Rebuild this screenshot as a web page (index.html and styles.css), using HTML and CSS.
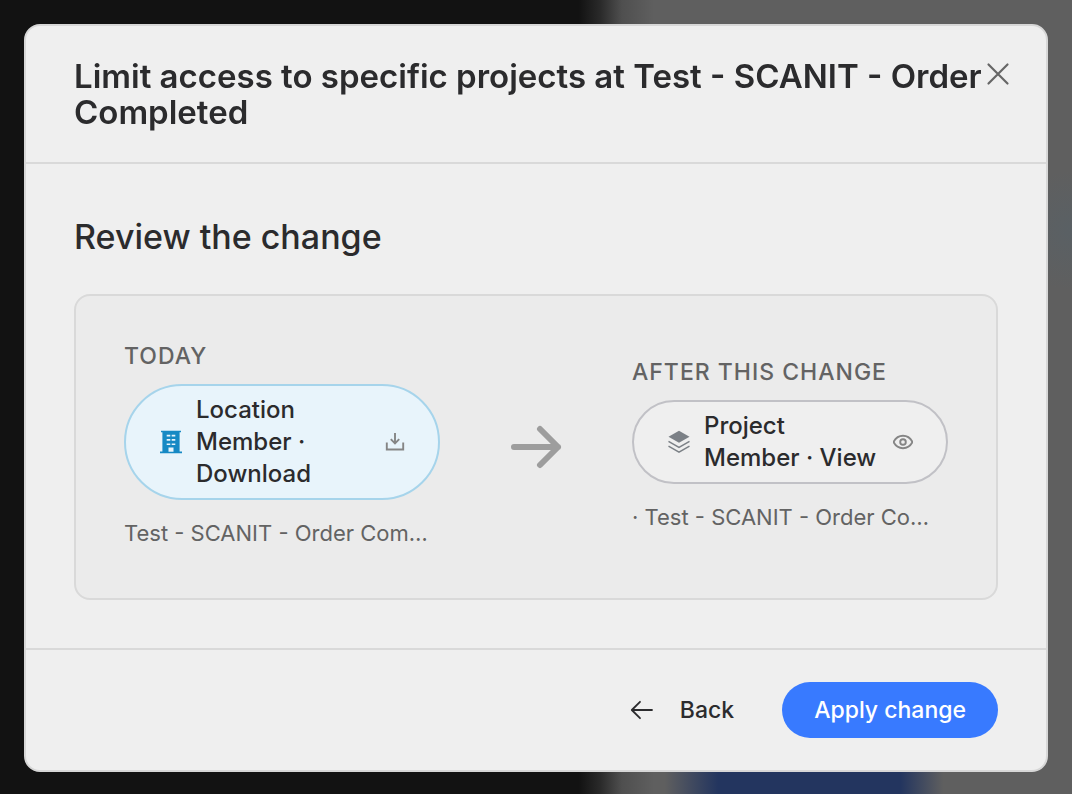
FILE: index.html
```html
<!DOCTYPE html>
<html lang="en">
<head>
<meta charset="utf-8">
<meta name="viewport" content="width=device-width, initial-scale=1">
<title>Limit access</title>
<link rel="stylesheet" href="styles.css">
</head>
<body class="page">
<div class="backdrop" aria-hidden="true"></div>
<main class="dialog" role="dialog" aria-modal="true" aria-labelledby="dialog-title">
  <header class="dialog-header">
    <h1 class="dialog-title" id="dialog-title">Limit access to specific projects at Test - SCANIT - Order Completed</h1>
    <button class="close" type="button" aria-label="Close">
      <svg width="24" height="24" viewBox="0 0 24 24" fill="none" stroke="currentColor" stroke-width="2.2" stroke-linecap="round"><path d="M2.5 2.5 21.5 21.5M21.5 2.5 2.5 21.5"/></svg>
    </button>
  </header>
  <section class="dialog-body">
    <h2 class="subtitle">Review the change</h2>
    <div class="comparison">
      <div class="state">
        <h3 class="label">TODAY</h3>
        <div class="pill pill-location">
          <svg class="role-icon" width="24" height="24" viewBox="0 0 24 24"><path fill="#1689c4" fill-rule="evenodd" d="M2 .8h20v1.4h-1.4v19.2H23v1.8H1v-1.8h2.400V2.200H2zM7.700 4.800v1.700h3.600V4.800zm5 0v1.700h3.600V4.800zm-5 4.300v1.700h3.600V9.100zm5 0v1.700h3.600V9.100zm-5 4.300v1.700h3.600v-1.700zm5 0v1.700h3.600v-1.700zM9.500 17.600v4.100h5v-4.100z"/></svg>
          <span class="role">Location Member · Download</span>
          <svg class="access-icon" width="20" height="20" viewBox="0 0 20 20" fill="none" stroke="#858585" stroke-width="1.900"><path d="M1.800 10.500v7h16.400v-7M10 1v10M5.800 7.100l4.200 4.200 4.200-4.200"/></svg>
        </div>
        <p class="scope">Test - SCANIT - Order Com…</p>
      </div>
      <svg class="change-arrow" width="52" height="44" viewBox="0 0 52 44" fill="none" stroke="#9d9d9d" stroke-width="6" stroke-linecap="round" stroke-linejoin="round"><path d="M4 22h44M30 4l18 18-18 18"/></svg>
      <div class="state">
        <h3 class="label">AFTER THIS CHANGE</h3>
        <div class="pill">
          <svg class="role-icon" width="24" height="24" viewBox="0 0 24 24"><path fill="#7b8086" d="M12 .8 22.500 6.700 12 12.800 1.500 6.700z"/><path fill="none" stroke="#7b8086" stroke-width="1.500" d="m1.500 11.300 10.500 6 10.500-6M1.500 16.200l10.500 6 10.500-6"/></svg>
          <span class="role">Project Member · View</span>
          <svg class="access-icon" width="20" height="20" viewBox="0 0 20 20" fill="none" stroke="#858585" stroke-width="1.900"><path d="M.5 10C2.500 6 6 3.800 10 3.800S17.500 6 19.500 10c-2 4-5.500 6.200-9.500 6.200S2.500 14 .5 10z"/><circle cx="10" cy="10" r="2.800"/></svg>
        </div>
        <p class="scope">· Test - SCANIT - Order Co…</p>
      </div>
    </div>
  </section>
  <footer class="dialog-footer">
    <button class="button button-back" type="button">
      <svg width="24" height="24" viewBox="0 0 24 24" fill="none" stroke="currentColor" stroke-width="1.800" stroke-linecap="round" stroke-linejoin="round"><path d="M22 12H2M10 3.800 1.800 12l8.200 8.200"/></svg>
      Back
    </button>
    <button class="button button-primary" type="button">Apply change</button>
  </footer>
</main>
</body>
</html>
```
FILE: styles.css
```css
* { box-sizing: border-box; }

.page {
  margin: 0;
  padding: 24px;
  min-height: 100vh;
  overflow: hidden;
  background: #121212;
  color: #2b2b2d;
  font-family: Inter, "Liberation Sans", sans-serif;
  font-size: 24px;
}

.backdrop {
  position: fixed;
  inset: 0;
  background:
    radial-gradient(ellipse 60px 60px at 100% 29%, #56616899, transparent),
    linear-gradient(90deg, transparent 62%, #23355f 67%, #23355f 84%, transparent 88%) 0 100% / 100% 26px no-repeat,
    linear-gradient(90deg, #121212 54%, #2a2a2a 56%, #4f4f4f 58%, #5f5f5f 61%);
}

.dialog {
  position: relative;
  background: #efefef;
  border: 2px solid #d7d7d7;
  border-radius: 16px;
}

.dialog-header {
  position: relative;
  padding: 32px 48px;
  border-bottom: 2px solid #d9d9d9;
}

.dialog-title, .subtitle, .label, .scope { margin: 0; }

.dialog-title {
  font-size: 33px;
  line-height: 36px;
  font-weight: 600;
}

.close {
  position: absolute;
  top: 36px;
  right: 36px;
  display: flex;
  padding: 0;
  border: 0;
  background: none;
  color: #666;
}

.dialog-body { padding: 48px; }

.subtitle {
  margin-bottom: 32px;
  font-size: 34px;
  line-height: 50px;
  font-weight: 500;
}

.comparison {
  display: grid;
  grid-template-columns: minmax(0, 1fr) auto minmax(0, 1fr);
  column-gap: 70px;
  align-items: center;
  padding: 48px;
  border: 2px solid #d9d9d9;
  border-radius: 16px;
  background: #ebebeb;
}

.state {
  display: flex;
  flex-direction: column;
  gap: 16px;
}

.label {
  color: #636363;
  font-size: 23px;
  line-height: 24px;
  font-weight: 500;
  letter-spacing: 1px;
}

.pill {
  display: flex;
  align-items: center;
  gap: 13px;
  padding: 8px 33px;
  border: 2px solid #c1c1c6;
  border-radius: 60px;
  background: #efefef;
}

.pill-location {
  border-color: #a6d4eb;
  background: #e8f4fb;
}

.role-icon, .access-icon { flex: none; }

.role {
  flex: 1;
  font-size: 24px;
  line-height: 32px;
  font-weight: 500;
}

.scope {
  color: #636363;
  font-size: 22px;
  line-height: 34px;
  white-space: nowrap;
}

.dialog-footer {
  display: flex;
  justify-content: flex-end;
  gap: 16px;
  padding: 32px 48px;
  border-top: 2px solid #d9d9d9;
}

.button {
  display: flex;
  align-items: center;
  gap: 26px;
  height: 56px;
  padding: 0 32px;
  border: 0;
  border-radius: 28px;
  background: none;
  color: inherit;
  font: 500 23px/32px Inter, "Liberation Sans", sans-serif;
}

.button-primary {
  background: #387aff;
  color: #fff;
}
```
